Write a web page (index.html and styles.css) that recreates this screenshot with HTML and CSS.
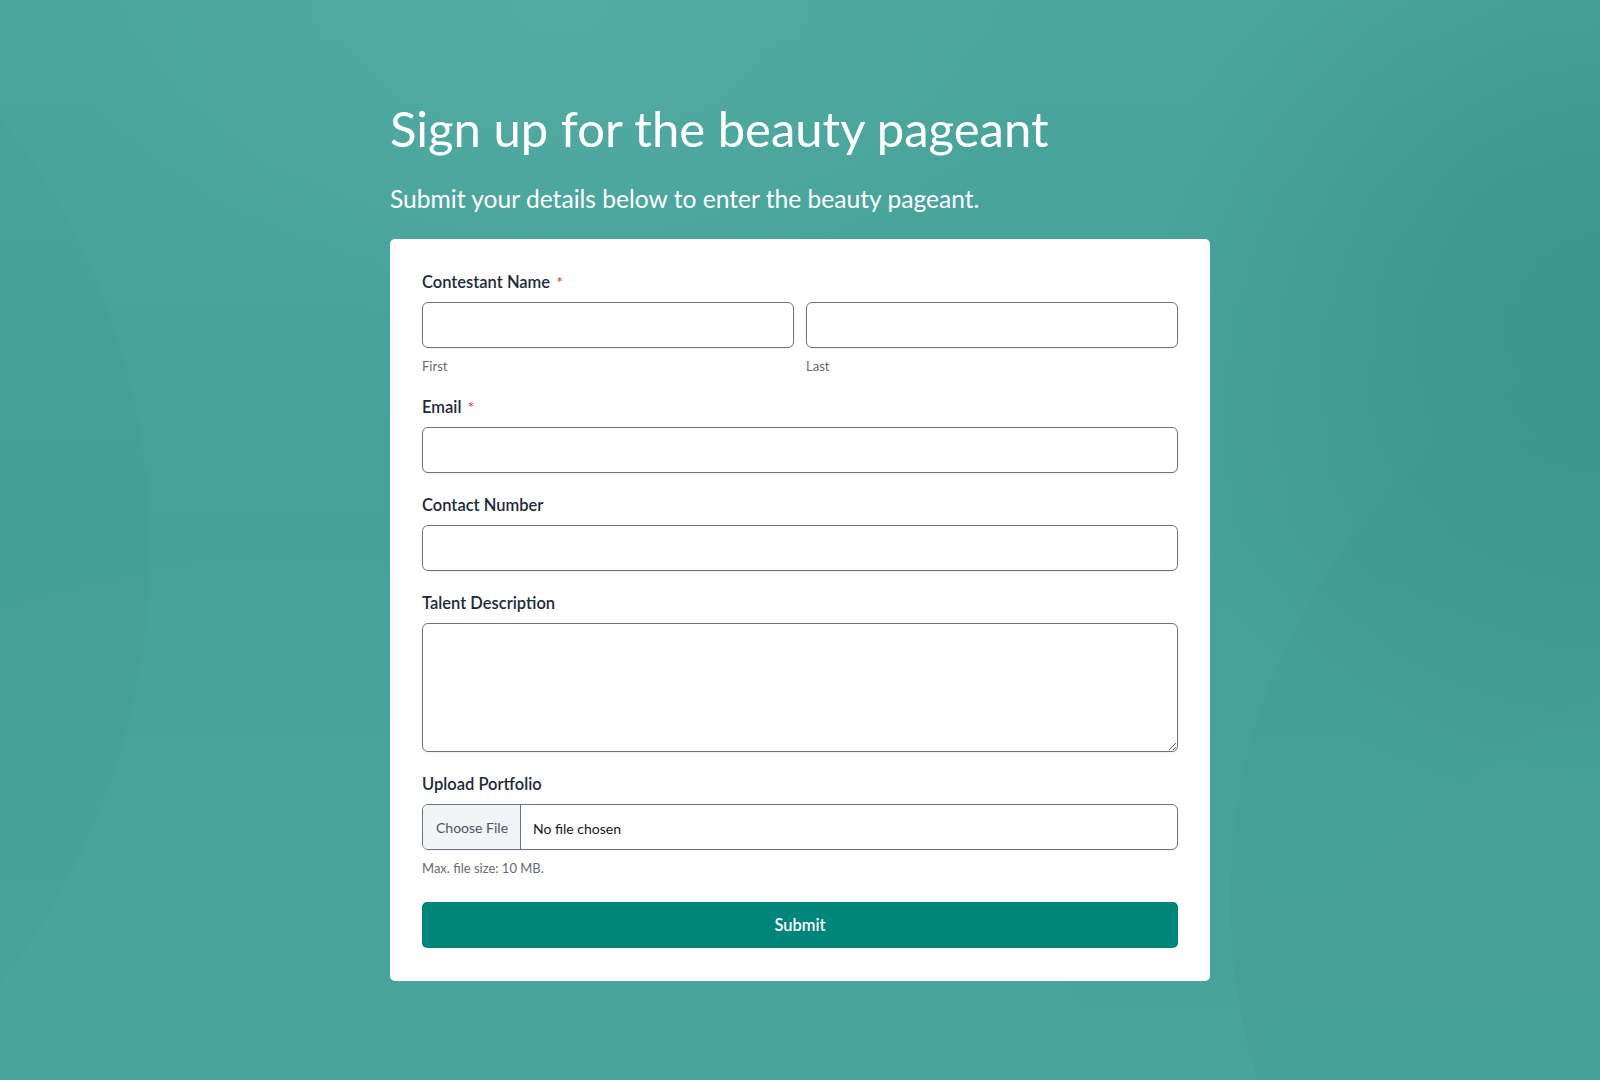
FILE: index.html
```html
<!DOCTYPE html>
<html lang="en">
<head>
<meta charset="utf-8">
<title>Sign up for the beauty pageant</title>
<link rel="stylesheet" href="styles.css">
</head>
<body>
<div class="bg" aria-hidden="true">
  <div class="blob b1"></div>
  <div class="blob b2"></div>
  <div class="blob b3"></div>
  <div class="blob b4"></div>
  <div class="blob b5"></div>
</div>
<main class="page">
  <h1 class="title">Sign up for the beauty pageant</h1>
  <p class="subtitle">Submit your details below to enter the beauty pageant.</p>
  <form class="card">
    <div class="field">
      <label class="label">Contestant Name <span class="req">*</span></label>
      <div class="row">
        <div class="col">
          <input class="input" type="text">
          <div class="sub">First</div>
        </div>
        <div class="col">
          <input class="input" type="text">
          <div class="sub">Last</div>
        </div>
      </div>
    </div>
    <div class="field">
      <label class="label">Email <span class="req">*</span></label>
      <input class="input" type="email">
    </div>
    <div class="field">
      <label class="label">Contact Number</label>
      <input class="input" type="text">
    </div>
    <div class="field">
      <label class="label">Talent Description</label>
      <textarea class="input textarea"></textarea>
    </div>
    <div class="field">
      <label class="label">Upload Portfolio</label>
      <div class="file">
        <span class="file-btn">Choose File</span>
        <span class="file-name">No file chosen</span>
      </div>
      <div class="sub">Max. file size: 10 MB.</div>
    </div>
    <button class="submit" type="button">Submit</button>
  </form>
</main>
</body>
</html>
```

FILE: styles.css
```css
* { box-sizing: border-box; }
html, body { margin: 0; padding: 0; }
body {
  height: 100vh;
  font-family: Lato, "Open Sans", sans-serif;
  background: #48a39b;
  position: relative;
  overflow: hidden;
}
.bg {
  position: absolute;
  inset: 0;
  overflow: hidden;
  background:
    radial-gradient(ellipse 700px 480px at 560px 0px, rgba(92,180,170,0.5), rgba(92,180,170,0) 70%),
    radial-gradient(ellipse 650px 700px at 1600px 320px, rgba(50,138,128,0.6), rgba(50,138,128,0) 70%),
    linear-gradient(180deg, #4aa59d 0%, #46a198 50%, #48a39b 100%);
  z-index: 0;
}
.blob {
  position: absolute;
  border-radius: 50%;
}
.b1 { width: 1400px; height: 1400px; left: -1250px; top: -150px; background: rgba(60,150,140,0.10); }
.b2 { width: 1800px; height: 1800px; left: -600px; top: 560px; background: rgba(84,172,162,0.10); }
.b3 { width: 1500px; height: 1500px; left: 1180px; top: 620px; background: rgba(80,170,160,0.14); }
.b4 { width: 1200px; height: 1200px; left: 1230px; top: 300px; background: rgba(62,150,140,0.16); }
.b5 { width: 1400px; height: 1400px; left: 1000px; top: 950px; background: rgba(80,168,158,0.10); }

.page {
  position: relative;
  z-index: 1;
  width: 820px;
  margin: 0 auto;
  padding-top: 99px;
}
.title {
  margin: 0;
  font-size: 49px;
  line-height: 59px;
  font-weight: 400;
  color: #ffffff;
}
.subtitle {
  margin: 23px 0 22px;
  font-size: 24.6px;
  line-height: 36px;
  color: #ffffff;
}
.card {
  background: #ffffff;
  border-radius: 5px;
  padding: 31px 32px 33px;
  display: flex;
  flex-direction: column;
}
.field {
  display: flex;
  flex-direction: column;
  margin-bottom: 20px;
}
.label {
  font-size: 16.5px;
  line-height: 24px;
  font-weight: 600;
  color: #1c2a3a;
  margin-bottom: 8px;
}
.req { color: #d63b2f; font-size: 16px; font-weight: 400; margin-left: 2px; }
.row {
  display: grid;
  grid-template-columns: 1fr 1fr;
  gap: 12px;
}
.col { display: flex; flex-direction: column; }
.input {
  display: block;
  width: 100%;
  height: 46px;
  border: 1px solid #6b7280;
  border-radius: 6px;
  background: #fff;
  box-shadow: 0 1px 2px rgba(0,0,0,0.06);
  font-family: inherit;
  font-size: 16px;
  padding: 0 12px;
  margin: 0;
}
.textarea {
  height: 129px;
  resize: vertical;
  padding: 10px 12px;
}
.sub {
  margin-top: 9px;
  font-size: 13px;
  line-height: 18px;
  color: #646b78;
}
.file {
  display: flex;
  align-items: stretch;
  height: 46px;
  border: 1px solid #6b7280;
  border-radius: 6px;
  overflow: hidden;
  box-shadow: 0 1px 2px rgba(0,0,0,0.06);
}
.file-btn {
  display: flex;
  align-items: center;
  padding: 0 12px 0 13px;
  background: #f3f4f6;
  border-right: 1px solid #6b7280;
  color: #4b5563;
  font-size: 14px;
}
.file-name {
  display: flex;
  align-items: center;
  padding-left: 12px;
  font-size: 14px;
  color: #111827;
  padding-top: 2px;
}
.submit {
  margin-top: 5px;
  height: 46px;
  border: none;
  border-radius: 5px;
  background: #00857a;
  color: #ffffff;
  font-family: inherit;
  font-size: 16.5px;
  font-weight: 600;
  width: 100%;
}
```
